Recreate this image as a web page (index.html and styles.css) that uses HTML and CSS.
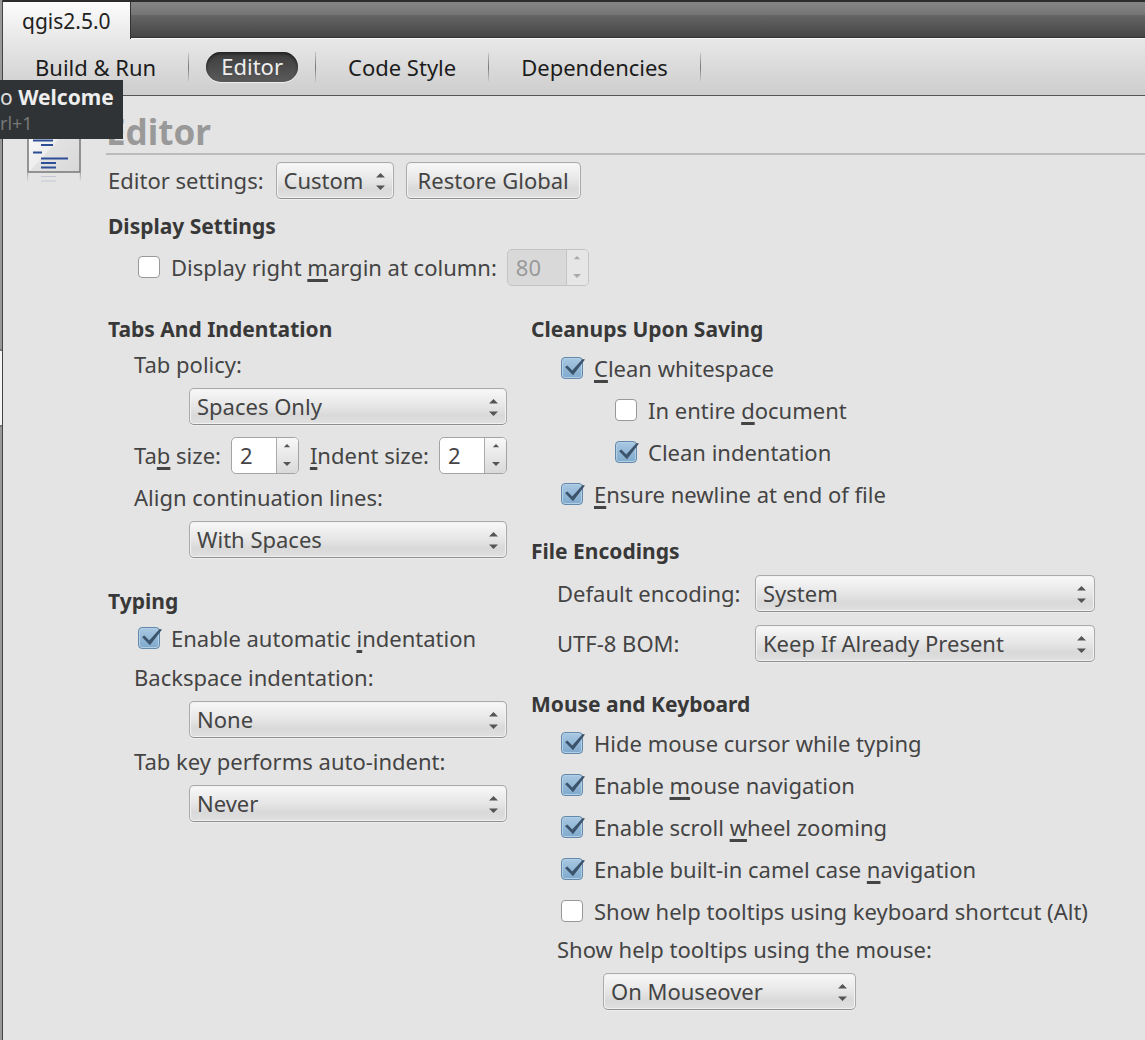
FILE: index.html
```html
<!DOCTYPE html>
<html lang="en">
<head>
<meta charset="utf-8">
<title>qgis2.5.0 - Editor</title>
<link rel="stylesheet" href="styles.css">
</head>
<body>
<svg class="defs" width="0" height="0" aria-hidden="true">
  <symbol id="arrows" viewBox="0 0 10 20"><path d="M5 0L10 5H0zM0 14H10L5 19z"/></symbol>
  <symbol id="up" viewBox="0 0 10 5"><path d="M5 0L9 4H1z"/></symbol>
  <symbol id="down" viewBox="0 0 10 5"><path d="M0 0H10L5 5z"/></symbol>
</svg>
<div class="app">
  <div class="rail"><div class="rail-active"></div></div>
  <div class="main">
    <header class="titlebar"><button class="project" type="button">qgis2.5.0</button></header>
    <nav class="tabs">
      <a class="tab" href="#build">Build &amp; Run</a>
      <a class="tab current" href="#editor"><span class="pill">Editor</span></a>
      <a class="tab" href="#style">Code Style</a>
      <a class="tab" href="#deps">Dependencies</a>
    </nav>
    <main class="page">
      <div class="page-icon">
        <svg width="54" height="68" viewBox="0 0 54 68" aria-hidden="true">
          <defs>
            <linearGradient id="paper" x1="0" y1="0" x2="1" y2="1"><stop offset="0" stop-color="#fff"/><stop offset=".5" stop-color="#eee"/><stop offset=".52" stop-color="#e2e2e2"/><stop offset="1" stop-color="#d8d8d8"/></linearGradient>
            <linearGradient id="fade" x1="0" y1="0" x2="0" y2="1"><stop offset="0" stop-color="#aaa"/><stop offset="1" stop-color="#e4e4e4"/></linearGradient>
          </defs>
          <rect x="1" y="1" width="52" height="57" fill="url(#paper)" stroke="#777" stroke-width="1.5"/>
          <path d="M6 26.500H26M14 31H26M6 38.500H15M14 44.500H41M14 49H29M14 53.500H29" stroke="#2e4f96" stroke-width="1.800"/>
          <path d="M14 62.500H29M14 67H29" stroke="#c3c8d4" stroke-width="1.200"/>
          <path d="M0 59h1.200v9H0zM52.800 59H54v9h-1.200z" fill="url(#fade)"/>
        </svg>
      </div>
      <div class="content">
        <h1 class="title">Editor</h1>
        <form class="form">
          <div class="toolbar">
            <label for="settings">Editor settings:</label>
            <span class="combo short"><select id="settings"><option>Custom</option></select><svg class="arrows"><use href="#arrows"/></svg></span>
            <button class="button" type="button">Restore Global</button>
          </div>
          <section class="group">
            <h2>Display Settings</h2>
            <div class="row margin-row">
              <input class="check" type="checkbox" id="margin"><label for="margin">Display right <u>m</u>argin at column:</label>
              <span class="spin wide off"><input type="text" value="80" aria-label="Margin column" disabled><span class="steps"><button type="button" disabled aria-label="Increase"><svg><use href="#up"/></svg></button><button type="button" disabled aria-label="Decrease"><svg><use href="#down"/></svg></button></span></span>
            </div>
          </section>
          <div class="columns">
            <div class="left">
              <section class="group">
                <h2>Tabs And Indentation</h2>
                <label class="row" for="policy">Tab policy:</label>
                <div class="row deep"><span class="combo"><select id="policy"><option>Spaces Only</option></select><svg class="arrows"><use href="#arrows"/></svg></span></div>
                <div class="row sizes">
                  <label for="tabsize">Ta<u>b</u> size:</label>
                  <span class="spin"><input type="text" id="tabsize" value="2"><span class="steps"><button type="button" aria-label="Increase"><svg><use href="#up"/></svg></button><button type="button" aria-label="Decrease"><svg><use href="#down"/></svg></button></span></span>
                  <label class="push" for="indentsize"><u>I</u>ndent size:</label>
                  <span class="spin"><input type="text" id="indentsize" value="2"><span class="steps"><button type="button" aria-label="Increase"><svg><use href="#up"/></svg></button><button type="button" aria-label="Decrease"><svg><use href="#down"/></svg></button></span></span>
                </div>
                <label class="row" for="align">Align continuation lines:</label>
                <div class="row deep"><span class="combo"><select id="align"><option>With Spaces</option></select><svg class="arrows"><use href="#arrows"/></svg></span></div>
              </section>
              <section class="group typing">
                <h2>Typing</h2>
                <div class="row single"><input class="check" type="checkbox" id="auto" checked><label for="auto">Enable automatic <u>i</u>ndentation</label></div>
                <label class="row" for="backspace">Backspace indentation:</label>
                <div class="row deep"><span class="combo"><select id="backspace"><option>None</option></select><svg class="arrows"><use href="#arrows"/></svg></span></div>
                <label class="row" for="tabkey">Tab key performs auto-indent:</label>
                <div class="row deep"><span class="combo"><select id="tabkey"><option>Never</option></select><svg class="arrows"><use href="#arrows"/></svg></span></div>
              </section>
            </div>
            <div class="right">
              <section class="group checks">
                <h2>Cleanups Upon Saving</h2>
                <div class="row"><input class="check" type="checkbox" id="white" checked><label for="white"><u>C</u>lean whitespace</label></div>
                <div class="row nested"><input class="check" type="checkbox" id="entire"><label for="entire">In entire <u>d</u>ocument</label></div>
                <div class="row nested"><input class="check" type="checkbox" id="cleanind" checked><label for="cleanind">Clean indentation</label></div>
                <div class="row"><input class="check" type="checkbox" id="newline" checked><label for="newline"><u>E</u>nsure newline at end of file</label></div>
              </section>
              <section class="group encodings">
                <h2>File Encodings</h2>
                <div class="fields">
                  <label for="encoding">Default encoding:</label>
                  <span class="combo"><select id="encoding"><option>System</option></select><svg class="arrows"><use href="#arrows"/></svg></span>
                  <label for="bom">UTF-8 BOM:</label>
                  <span class="combo"><select id="bom"><option>Keep If Already Present</option></select><svg class="arrows"><use href="#arrows"/></svg></span>
                </div>
              </section>
              <section class="group checks">
                <h2>Mouse and Keyboard</h2>
                <div class="row"><input class="check" type="checkbox" id="hide" checked><label for="hide">Hide mouse cursor while typing</label></div>
                <div class="row"><input class="check" type="checkbox" id="mnav" checked><label for="mnav">Enable <u>m</u>ouse navigation</label></div>
                <div class="row"><input class="check" type="checkbox" id="zoom" checked><label for="zoom">Enable scroll <u>w</u>heel zooming</label></div>
                <div class="row"><input class="check" type="checkbox" id="camel" checked><label for="camel">Enable built-in camel case <u>n</u>avigation</label></div>
                <div class="row"><input class="check" type="checkbox" id="alt"><label for="alt">Show help tooltips using keyboard shortcut (Alt)</label></div>
                <label class="row compact" for="help">Show help tooltips using the mouse:</label>
                <div class="row hover"><span class="combo"><select id="help"><option>On Mouseover</option></select><svg class="arrows"><use href="#arrows"/></svg></span></div>
              </section>
            </div>
          </div>
        </form>
      </div>
    </main>
  </div>
  <div class="tooltip" role="tooltip"><div>o <b>Welcome</b></div><div class="shortcut">rl+1</div></div>
</div>
</body>
</html>
```
FILE: styles.css
```css
* { box-sizing: border-box; }
body {
  margin: 0;
  background: #e4e4e4;
  color: #444;
  font: 22px/28px "Noto Sans", "Open Sans", sans-serif;
}
.defs { position: absolute; }
input, select, button { font: inherit; color: inherit; margin: 0; }
label { white-space: nowrap; }
u {
  text-decoration: underline;
  text-decoration-thickness: 3px;
  text-underline-offset: 3px;
  text-decoration-skip-ink: none;
}
.app { position: relative; display: flex; min-height: 100vh; overflow: hidden; }
.rail { flex: none; width: 3px; padding-top: 349px; background: #999; border-right: 1px solid #444; }
.rail-active { height: 78px; background: #f4f4f4; border-block: 2px solid #777; }
.main { flex: 1; min-width: 0; }

.titlebar {
  display: flex;
  height: 38px;
  border-top: 2px solid #2c2c2c;
  border-bottom: 1px solid #333;
  background: linear-gradient(#858585 0, #747474 13px, #656565 13px, #464646 100%);
}
.project {
  height: 37px;
  padding: 0 19px;
  border: 0;
  border-right: 1px solid #333;
  background: linear-gradient(#fcfcfc, #e8e8e8);
  color: #222;
  font-size: 21px;
}
.tabs {
  display: flex;
  align-items: center;
  height: 58px;
  border-top: 1px solid #f8f8f8;
  border-bottom: 1px solid #555;
  background: linear-gradient(#e8e8e8, #cdcdcd);
}
.tab {
  height: 28px;
  padding: 0 32px;
  border-right: 1px solid;
  border-image: linear-gradient(#ccc, #777 50%, #ccc) 1;
  color: #1c1c1c;
  text-decoration: none;
  white-space: nowrap;
}
.current { height: 30px; padding: 0 17px; }
.pill {
  display: block;
  padding: 0 15px 2px;
  border-radius: 15px;
  background: linear-gradient(#3c3c3c, #5a5a5a);
  box-shadow: inset 0 2px 3px #222, 0 1px 0 #eee;
  color: #eee;
}

.page { display: flex; }
.page-icon { flex: none; width: 103px; padding: 18px 0 0 24px; }
.content { flex: 1; min-width: 0; }
.title {
  margin: 0;
  padding: 8px 0 0;
  height: 59px;
  border-bottom: 2px solid #bbb;
  color: #999;
  font-size: 35px;
  line-height: 56px;
}
.form { padding: 4px 50px 24px 2px; }
.toolbar { display: flex; align-items: center; height: 42px; gap: 12px; }
h2 { margin: 0; height: 28px; color: #383838; font-size: 21px; line-height: 28px; white-space: nowrap; }
.toolbar + .group { margin-top: 11px; }
.group .row { padding-left: 26px; }
.row { display: flex; align-items: center; height: 42px; }
.margin-row { margin-top: 6px; }
.margin-row .spin { margin-left: 10px; }
.columns { display: grid; grid-template-columns: 399px minmax(0, 564px); gap: 24px; margin-top: 27px; }
.group .deep { padding-left: 81px; }
.sizes { margin-top: 7px; gap: 10px; }
.push { margin-left: auto; }
.typing { margin-top: 27px; }
.single { height: 36px; margin-top: 5px; }
.checks h2 { margin-bottom: 4px; }
.group .nested { padding-left: 80px; }
.encodings { margin: 22px 0 26px; }
.fields { display: grid; grid-template-columns: 198px 1fr; row-gap: 8px; padding: 7px 0 0 26px; }
.fields > * { height: 42px; }
.fields label { line-height: 42px; }
.group .compact { height: 34px; }
.group .hover { margin-top: 4px; padding-left: 72px; }
.hover .combo { max-width: 253px; }

.combo { position: relative; display: flex; align-items: center; flex: 1; }
.short { flex: none; width: 118px; }
.combo select, .button {
  height: 37px;
  border: 1px solid #aaa;
  border-bottom-color: #8e8e8e;
  border-radius: 5px;
  background: linear-gradient(#f8f8f8, #e6e6e6 50%, #d9d9d9 75%, #e0e0e0);
  box-shadow: inset 0 0 0 1px #f2f2f2, 0 1px 0 #eee;
}
.combo select { appearance: none; width: 100%; padding: 0 24px 0 7px; }
.button { padding: 0 11px; white-space: nowrap; }
.arrows { position: absolute; right: 9px; top: 50%; width: 9px; height: 18px; margin-top: -7px; fill: #555; pointer-events: none; }

.spin {
  display: flex;
  width: 68px;
  height: 37px;
  border: 1px solid #a4a4a4;
  border-radius: 5px;
  background: #fff;
  overflow: hidden;
}
.spin input { width: 44px; padding: 0 8px; border: 0; background: none; }
.steps {
  display: flex;
  flex: 1;
  flex-direction: column;
  border-left: 1px solid #aaa;
  background: linear-gradient(#f8f8f8, #d9d9d9);
}
.steps button { display: flex; flex: 1; align-items: center; justify-content: center; padding: 0; border: 0; background: none; }
.steps svg { width: 8px; height: 4px; fill: #555; }
.wide { width: 82px; }
.wide input { width: 58px; }
.off { border-color: #c4c4c4; background: #d9d9d9; color: #999; }
.off .steps { border-color: #c4c4c4; background: #e6e6e6; }
.off svg { fill: #aaa; }

.check {
  appearance: none;
  position: relative;
  flex: none;
  width: 22px;
  height: 22px;
  margin: 0 11px 0 4px;
  border: 1px solid #999;
  border-radius: 4px;
  background: #fff;
}
.check:checked { border-color: #6289ab; background: linear-gradient(#a9c8e2, #7fa9cc); box-shadow: inset 0 0 0 1px #b3cfe6; }
.check:checked::after {
  content: "";
  position: absolute;
  left: 3px;
  top: 0;
  width: 20px;
  height: 18px;
  background: #3c546b;
  clip-path: polygon(0 50%, 12% 42%, 36% 70%, 88% 6%, 100% 8%, 40% 96%);
}

.tooltip {
  position: absolute;
  left: 0;
  top: 80px;
  width: 123px;
  height: 59px;
  padding: 3px 0;
  background: #2f3335;
  color: #ddd;
  font-size: 21px;
  white-space: nowrap;
}
.tooltip b { color: #eee; }
.shortcut { color: #777; font-size: 18px; line-height: 24px; }
```
